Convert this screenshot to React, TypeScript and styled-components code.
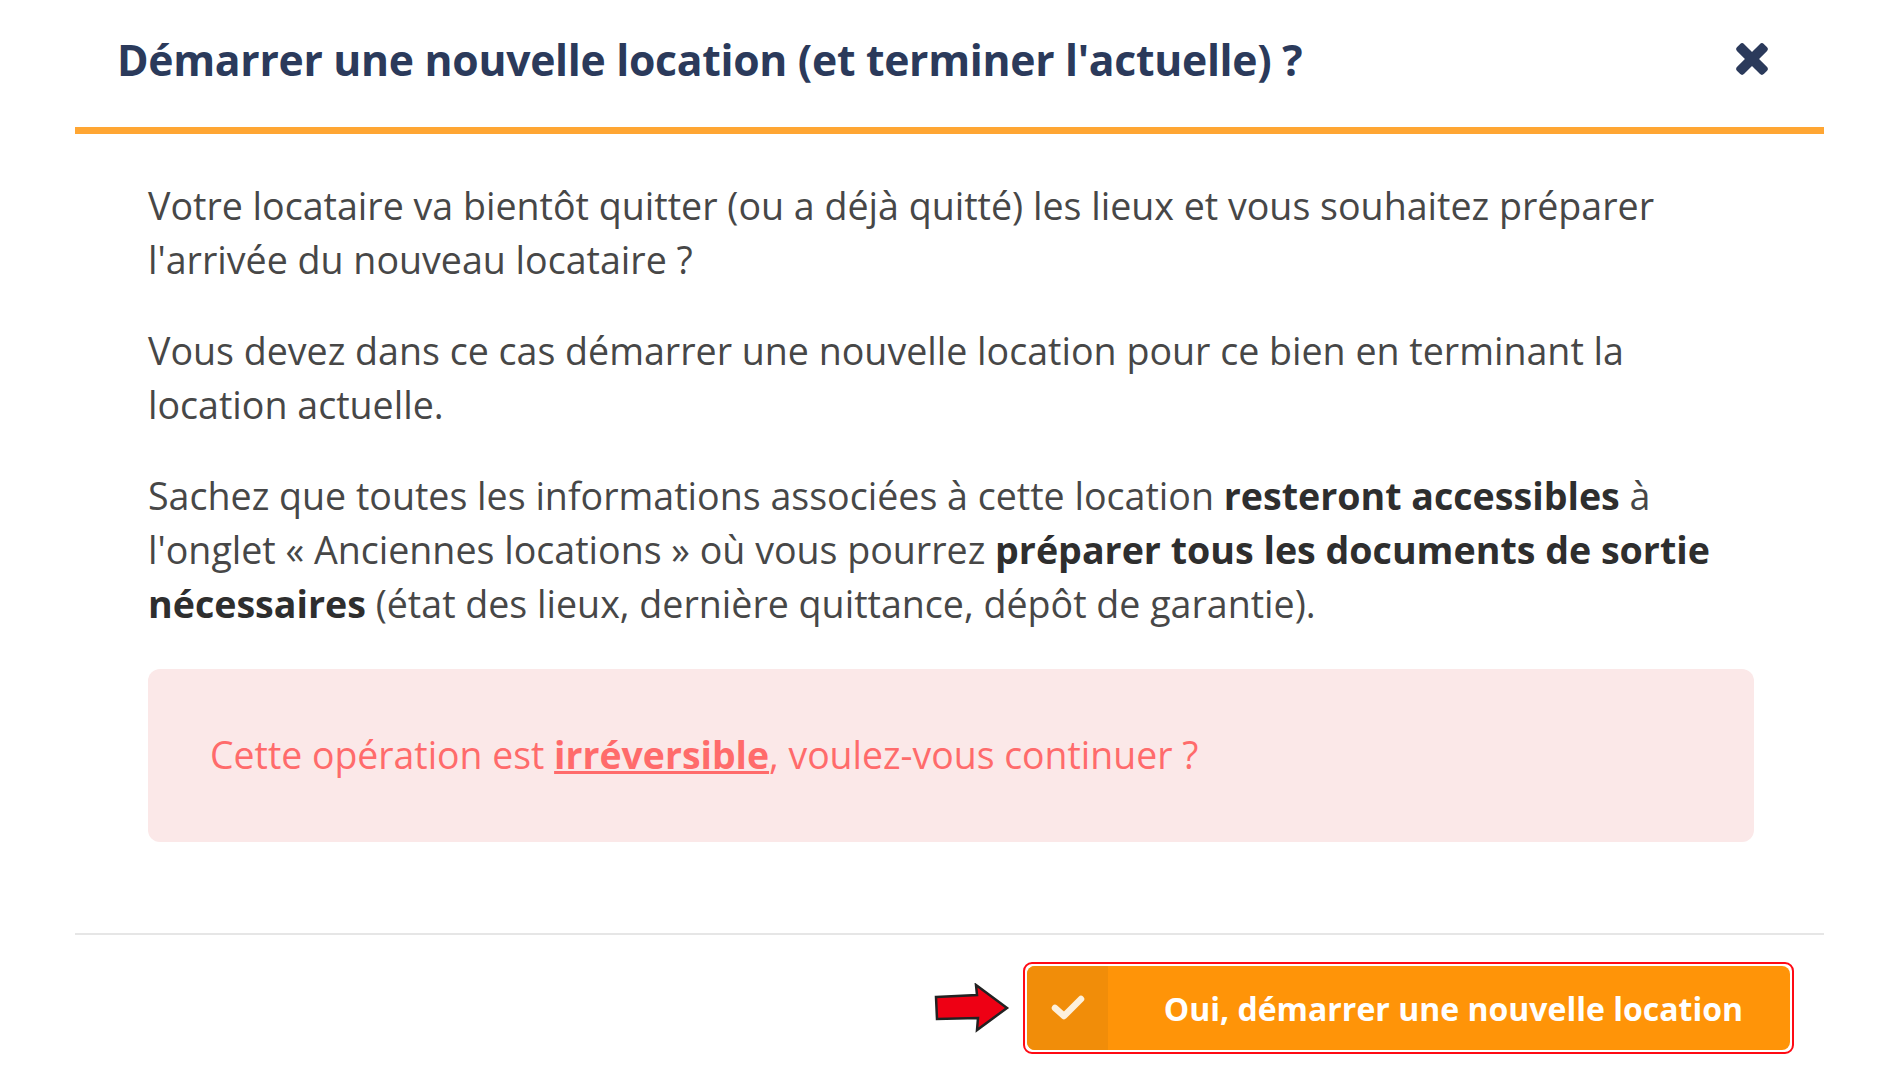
import styled, { createGlobalStyle } from "styled-components";

const GlobalStyle = createGlobalStyle`
  html, body {
    margin: 0;
    padding: 0;
    background: #ffffff;
  }
  body {
    font-family: "Open Sans", "Noto Sans", sans-serif;
  }
`;

const Modal = styled.div`
  width: 1749px;
  margin-left: 75px;
  background: #fff;
`;

const Header = styled.div`
  height: 134px;
  display: flex;
  align-items: center;
  justify-content: space-between;
  padding: 0 56px 9px 42px;
  box-sizing: border-box;
  border-bottom: 7px solid #ffa633;
`;

const Title = styled.h2`
  margin: 0;
  font-size: 42.7px;
  font-weight: 700;
  color: #2b3a5b;
  letter-spacing: -0.3px;
`;

const CloseButton = styled.button`
  border: none;
  background: none;
  padding: 0;
  width: 32px;
  height: 32px;
  display: flex;
  cursor: pointer;
`;

const Body = styled.div`
  padding: 45px 70px 91px 73px;
`;

const Para = styled.p`
  margin: 0 0 37px;
  font-size: 37.6px;
  line-height: 54px;
  color: #474747;

  b {
    color: #2e2e2e;
    font-weight: 700;
  }
`;

const Alert = styled.div`
  margin-top: 38px;
  background: #fbe8e8;
  border-radius: 12px;
  padding: 59px 62px 60px;
  font-size: 37.4px;
  line-height: 54px;
  color: #ff6b6b;

  u {
    font-weight: 700;
  }
`;

const Footer = styled.div`
  border-top: 2px solid #e6e6e6;
  display: flex;
  justify-content: flex-end;
  align-items: center;
  gap: 13px;
  padding: 27px 30px 28px 0;
`;

const Highlight = styled.div`
  border: 2px solid #ff0a14;
  border-radius: 9px;
  padding: 2px;
  background: #fff;
`;

const ConfirmButton = styled.button`
  display: flex;
  align-items: stretch;
  width: 763px;
  height: 84px;
  padding: 0;
  border: none;
  border-radius: 8px;
  overflow: hidden;
  background: #ff9408;
  color: #fff;
  font-family: "Open Sans", "Noto Sans", sans-serif;
  font-weight: 700;
  font-size: 32px;
  cursor: pointer;
`;

const IconCell = styled.span`
  width: 81px;
  display: flex;
  align-items: center;
  justify-content: center;
  background: #f18d09;
`;

const Label = styled.span`
  flex: 1;
  display: flex;
  align-items: center;
  justify-content: flex-end;
  padding-right: 47px;
  white-space: nowrap;
`;

const CloseIcon = () => (
  <svg width="32" height="32" viewBox="0 0 32 32">
    <g fill="#2b3a5b" transform="rotate(45 16 16)">
      <rect x="-3" y="11" width="38" height="10" rx="3" />
      <rect x="11" y="-3" width="10" height="38" rx="3" />
    </g>
  </svg>
);

const CheckIcon = () => (
  <svg width="34" height="26" viewBox="0 0 34 26">
    <path
      d="M4 13 L13 21 L30 4"
      fill="none"
      stroke="#fdf0dc"
      strokeWidth="6.5"
      strokeLinecap="round"
      strokeLinejoin="round"
    />
  </svg>
);

const PointerArrow = () => (
  <svg width="76" height="50" viewBox="0 0 76 50">
    <polygon
      points="2,14 43,12 42,2 73,25 43,47 44,35 3,36"
      fill="#ee0014"
      stroke="#222"
      strokeWidth="2.5"
      strokeLinejoin="miter"
    />
  </svg>
);

export default function App() {
  return (
    <>
      <GlobalStyle />
      <Modal>
        <Header>
          <Title>Démarrer une nouvelle location (et terminer l'actuelle) ?</Title>
          <CloseButton aria-label="Fermer">
            <CloseIcon />
          </CloseButton>
        </Header>
        <Body>
          <Para>
            Votre locataire va bientôt quitter (ou a déjà quitté) les lieux et vous souhaitez préparer
            l'arrivée du nouveau locataire ?
          </Para>
          <Para>
            Vous devez dans ce cas démarrer une nouvelle location pour ce bien en terminant la
            location actuelle.
          </Para>
          <Para>
            Sachez que toutes les informations associées à cette location <b>resteront accessibles</b> à
            l'onglet « Anciennes locations » où vous pourrez{" "}
            <b>préparer tous les documents de sortie nécessaires</b> (état des lieux, dernière
            quittance, dépôt de garantie).
          </Para>
          <Alert>
            Cette opération est <u>irréversible</u>, voulez-vous continuer ?
          </Alert>
        </Body>
        <Footer>
          <PointerArrow />
          <Highlight>
            <ConfirmButton>
              <IconCell>
                <CheckIcon />
              </IconCell>
              <Label>Oui, démarrer une nouvelle location</Label>
            </ConfirmButton>
          </Highlight>
        </Footer>
      </Modal>
    </>
  );
}
